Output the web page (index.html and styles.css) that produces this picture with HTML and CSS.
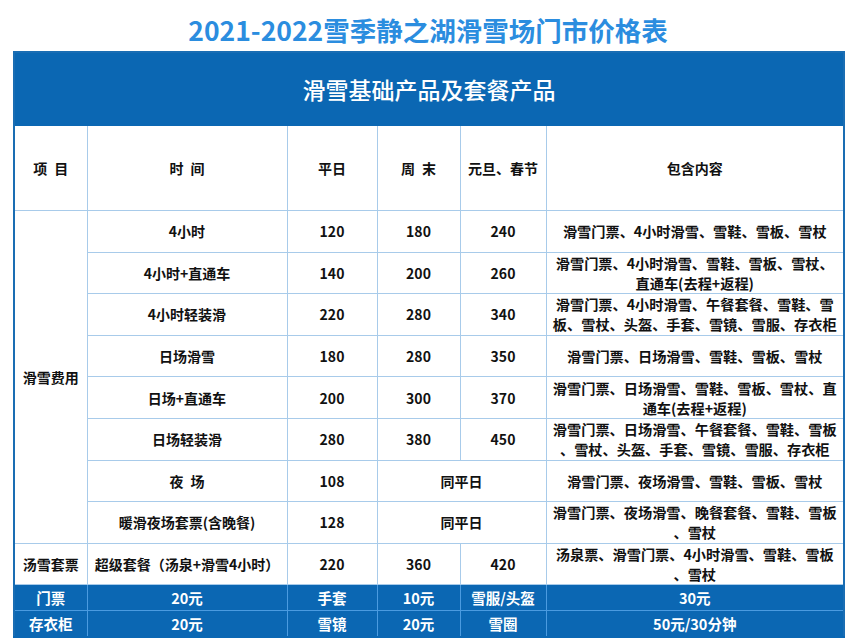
FILE: index.html
```html
<!DOCTYPE html>
<html lang="zh-CN">
<head>
<meta charset="utf-8">
<link rel="stylesheet" href="styles.css">
</head>
<body>
<div class="page">
  <h1 class="title">2021-2022雪季静之湖滑雪场门市价格表</h1>
  <table class="price">
    <colgroup>
      <col class="c1"><col class="c2"><col class="c3"><col class="c4"><col class="c5"><col class="c6">
    </colgroup>
    <thead>
      <tr class="band"><th colspan="6" class="edge">滑雪基础产品及套餐产品</th></tr>
      <tr class="head">
        <th class="edge">项&ensp;目</th><th>时&ensp;间</th><th>平日</th><th>周&ensp;末</th><th>元旦、春节</th><th>包含内容</th>
      </tr>
    </thead>
    <tbody>
      <tr class="row">
        <td rowspan="8" class="cat edge">滑雪费用</td>
        <td>4小时</td><td>120</td><td>180</td><td>240</td>
        <td class="desc">滑雪门票、4小时滑雪、雪鞋、雪板、雪杖</td>
      </tr>
      <tr class="row">
        <td>4小时+直通车</td><td>140</td><td>200</td><td>260</td>
        <td class="desc">滑雪门票、4小时滑雪、雪鞋、雪板、雪杖、<br>直通车(去程+返程)</td>
      </tr>
      <tr class="row">
        <td>4小时轻装滑</td><td>220</td><td>280</td><td>340</td>
        <td class="desc">滑雪门票、4小时滑雪、午餐套餐、雪鞋、雪<br>板、雪杖、头盔、手套、雪镜、雪服、存衣柜</td>
      </tr>
      <tr class="row">
        <td>日场滑雪</td><td>180</td><td>280</td><td>350</td>
        <td class="desc">滑雪门票、日场滑雪、雪鞋、雪板、雪杖</td>
      </tr>
      <tr class="row">
        <td>日场+直通车</td><td>200</td><td>300</td><td>370</td>
        <td class="desc">滑雪门票、日场滑雪、雪鞋、雪板、雪杖、直<br>通车(去程+返程)</td>
      </tr>
      <tr class="row">
        <td>日场轻装滑</td><td>280</td><td>380</td><td>450</td>
        <td class="desc">滑雪门票、日场滑雪、午餐套餐、雪鞋、雪板<br>、雪杖、头盔、手套、雪镜、雪服、存衣柜</td>
      </tr>
      <tr class="row">
        <td>夜&ensp;场</td><td>108</td><td colspan="2">同平日</td>
        <td class="desc">滑雪门票、夜场滑雪、雪鞋、雪板、雪杖</td>
      </tr>
      <tr class="row">
        <td>暖滑夜场套票(含晚餐)</td><td>128</td><td colspan="2">同平日</td>
        <td class="desc">滑雪门票、夜场滑雪、晚餐套餐、雪鞋、雪板<br>、雪杖</td>
      </tr>
      <tr class="row">
        <td class="cat edge">汤雪套票</td>
        <td>超级套餐（汤泉+滑雪4小时）</td><td>220</td><td>360</td><td>420</td>
        <td class="desc">汤泉票、滑雪门票、4小时滑雪、雪鞋、雪板<br>、雪杖</td>
      </tr>
    </tbody>
    <tfoot>
      <tr class="foot">
        <td class="edge">门票</td><td>20元</td><td>手套</td><td>10元</td><td>雪服/头盔</td><td>30元</td>
      </tr>
      <tr class="foot">
        <td class="edge">存衣柜</td><td>20元</td><td>雪镜</td><td>20元</td><td>雪圈</td><td>50元/30分钟</td>
      </tr>
    </tfoot>
  </table>
</div>
</body>
</html>
```

FILE: styles.css
```css
html, body {
  margin: 0;
  padding: 0;
  background: #ffffff;
}

body {
  font-family: "Noto Sans CJK SC", sans-serif;
  color: #111111;
}

.page {
  width: 830px;
  margin: 0 0 0 13px;
}

.title {
  margin: 0;
  height: 51px;
  padding-top: 8px;
  box-sizing: border-box;
  line-height: 43px;
  text-align: center;
  font-family: "Noto Sans CJK SC", sans-serif;
  font-weight: 700;
  font-size: 26.5px;
  color: #2b8ddf;
}

.price {
  width: 830px;
  border-collapse: collapse;
  table-layout: fixed;
  border: 2px solid #1a6db3;
}

.c1 { width: 73px; }
.c2 { width: 200px; }
.c3 { width: 90px; }
.c4 { width: 83px; }
.c5 { width: 86px; }
.c6 { width: 298px; }

.price th,
.price td {
  border: 1px solid #a8cbea;
  text-align: center;
  vertical-align: middle;
  padding: 0;
  font-size: 14px;
  font-weight: 700;
  font-family: "Noto Sans CJK SC", sans-serif;
  line-height: 20px;
  white-space: nowrap;
}

.band th {
  height: 72px;
  background: #0b67b3;
  color: #ffffff;
  font-size: 23px;
  font-weight: 500;
  border: 1px solid #0b67b3;
}

.head th {
  height: 84px;
}

.row td {
  height: 40.6px;
}

.price .desc {
  font-size: 14.2px;
}

.foot td {
  height: 25px;
  background: #0b67b3;
  color: #ffffff;
  border: 1px solid #4b9be0;
  font-size: 14.5px;
}

.price .edge {
  border-left: 2px solid #1a6db3;
}

.price tr > *:last-child {
  border-right: 2px solid #1a6db3;
}

.price .foot:last-child td {
  border-bottom: 2px solid #0b67b3;
}
```
